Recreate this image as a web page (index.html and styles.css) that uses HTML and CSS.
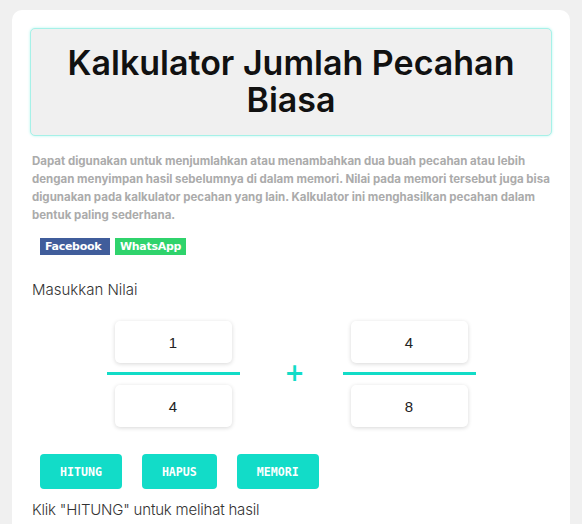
FILE: index.html
```html
<!DOCTYPE html>
<html lang="id">
<head>
<meta charset="utf-8">
<title>Kalkulator Jumlah Pecahan Biasa</title>
<link rel="stylesheet" href="styles.css">
</head>
<body>
<div class="card">
  <h1 class="title">Kalkulator Jumlah Pecahan Biasa</h1>
  <p class="desc">Dapat digunakan untuk menjumlahkan atau menambahkan dua buah pecahan atau lebih dengan menyimpan hasil sebelumnya di dalam memori. Nilai pada memori tersebut juga bisa digunakan pada kalkulator pecahan yang lain. Kalkulator ini menghasilkan pecahan dalam bentuk paling sederhana.</p>
  <div class="share">
    <span class="share-btn fb">Facebook</span>
    <span class="share-btn wa">WhatsApp</span>
  </div>
  <div class="label">Masukkan Nilai</div>
  <div class="fractions">
    <div class="fraction">
      <input class="num" type="text" value="1">
      <div class="bar"></div>
      <input class="num" type="text" value="4">
    </div>
    <div class="plus">+</div>
    <div class="fraction">
      <input class="num" type="text" value="4">
      <div class="bar"></div>
      <input class="num" type="text" value="8">
    </div>
  </div>
  <div class="actions">
    <button class="btn">HITUNG</button>
    <button class="btn">HAPUS</button>
    <button class="btn">MEMORI</button>
  </div>
  <div class="result">Klik "HITUNG" untuk melihat hasil</div>
</div>
</body>
</html>
```
FILE: styles.css
```css
html, body {
  margin: 0;
  padding: 0;
  background: #f0f0f0;
}
body {
  padding: 10px 12px 0 12px;
  font-family: Inter, "Noto Sans", sans-serif;
}
.card {
  background: #fff;
  border-radius: 10px 10px 0 0;
  padding: 18px 18px 20px 18px;
  min-height: 520px;
  box-sizing: border-box;
}
.title {
  margin: 0;
  background: #f0f0f0;
  border: 1px solid #a6f1e8;
  box-shadow: 0 0 3px #b5f5ee;
  border-radius: 5px;
  text-align: center;
  font-size: 34px;
  font-weight: 600;
  line-height: 37px;
  color: #111;
  padding: 15px 10px 17px;
  letter-spacing: 0;
}
.desc {
  margin: 16px -2px 0 2px;
  font-size: 11.5px;
  line-height: 18px;
  font-weight: 700;
  color: #ababab;
}
.share {
  display: flex;
  gap: 5px;
  margin: 14px 0 0 10px;
}
.share-btn {
  display: inline-block;
  color: #fff;
  font-family: "DejaVu Sans", sans-serif;
  font-weight: 700;
  font-size: 11px;
  line-height: 17px;
  height: 17px;
  padding: 0 5px;
  letter-spacing: -0.3px;
}
.fb { background: #405d9b; width: 60px; }
.wa { background: #2fd36c; width: 61px; }
.label {
  margin: 25px 0 0 2px;
  font-size: 15px;
  font-weight: 300;
  color: #333;
  line-height: 20px;
}
.fractions {
  display: flex;
  justify-content: center;
  align-items: center;
  gap: 45px;
  margin-top: 21px;
}
.fraction {
  width: 133px;
  display: flex;
  flex-direction: column;
  align-items: center;
}
.num {
  width: 117px;
  height: 42px;
  box-sizing: border-box;
  border: none;
  border-radius: 5px;
  background: #fff;
  box-shadow: 0 1px 4px rgba(0,0,0,0.16);
  text-align: center;
  font-family: "Liberation Sans", Arial, sans-serif;
  font-size: 15px;
  color: #222;
  outline: none;
  padding: 0;
}
.bar {
  width: 133px;
  height: 3px;
  background: #12dcc7;
  margin: 9px 0 10px;
}
.plus {
  width: 13px;
  color: #12dcc7;
  font-family: "DejaVu Sans", sans-serif;
  font-weight: 700;
  font-size: 24px;
  line-height: 24px;
  text-align: center;
  margin-top: -3px;
}
.actions {
  display: flex;
  gap: 20px;
  margin: 27px 0 0 10px;
}
.btn {
  background: #12dcc8;
  border: none;
  border-radius: 4px;
  color: #fff;
  font-family: "DejaVu Sans Mono", monospace;
  font-weight: 700;
  font-size: 11.6px;
  height: 35px;
  padding: 0 20px;
  letter-spacing: 0;
}
.result {
  margin: 11px 0 0 2px;
  font-size: 15px;
  font-weight: 300;
  color: #333;
  line-height: 20px;
  letter-spacing: -0.2px;
}
```
